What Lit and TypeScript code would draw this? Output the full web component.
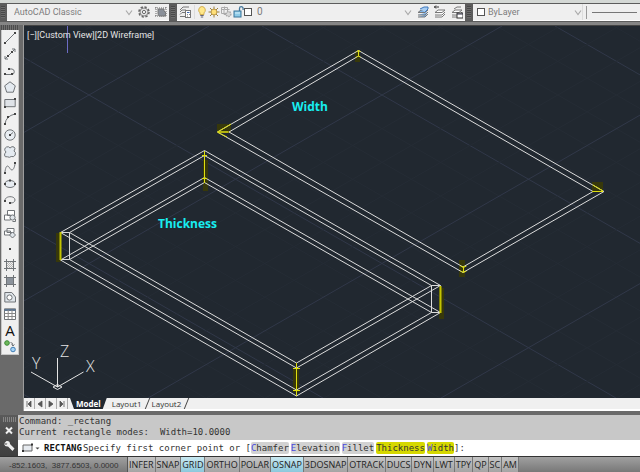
import { LitElement, html, svg, css } from "lit";
import { customElement } from "lit/decorators.js";
import { classMap } from "lit/directives/class-map.js";

const reset = css`
  :host, * { box-sizing: border-box; }
  button, select, input {
    margin: 0; padding: 0; border: 0; border-radius: 0; background: none;
    font: inherit; color: inherit; appearance: none; outline-offset: -1px;
  }
  svg { display: block; }
`;

const chevron = svg`<path d="M1 2.500l3 4 3-4" fill="none" stroke="#a8a8a8" stroke-width="1.100"/>`;

@customElement("tool-bars")
class ToolBars extends LitElement {
  static styles = [reset, css`
    :host {
      display: block; background: #5c5c5c; color: #7c7c7c;
      border-top: 3px solid #d4d8d5; padding: 1px 0 4px;
      box-shadow: inset 0 -3px #858585;
      font: 9px/16px Roboto, "Open Sans", sans-serif;
    }
    .row { display: grid; grid-template-columns: 162px 288px 1fr; gap: 8px; padding-left: 7px; }
    .bar { display: flex; align-items: center; height: 17px; background: #efefef; border-bottom: 1px solid #fff; position: relative; }
    .bar::before {
      content: ""; position: absolute; left: -6px; top: 2px; bottom: 2px; width: 4px;
      background: repeating-linear-gradient(#484848 0 1px, #6c6c6c 1px 2px);
    }
    .drop { display: flex; align-items: center; flex: 1; min-width: 0; height: 16px; }
    .drop select { flex: 1; min-width: 0; height: 16px; }
    .space select { padding-left: 7px; }
    .icons { display: flex; align-items: center; gap: 4px; padding: 0 2px; }
    .icons.wide { gap: 5px; padding: 0 2px 0 5px; }
    .icons button { width: 12px; height: 14px; }
    .icons.split { border-right: 1px solid #dcdcdc; padding-right: 3px; margin-right: 1px; }
    .layer select { padding-left: 4px; font-size: 10px; }
    .color { flex: none; width: 110px; border-right: 1px solid #dcdcdc; padding-left: 4px; }
    .color select { padding-left: 2px; }
    .line { flex: 1; margin-left: 3px; padding-left: 5px; border-left: 1px solid #999; height: 13px; display: flex; align-items: center; }
    .rule { width: 45px; border-top: 1px solid #777; }
  `];

  render() {
    return html`
      <div class="row">
        <div class="bar" role="toolbar" aria-label="Workspaces">
          <div class="drop space">
            <select aria-label="Workspace"><option>AutoCAD Classic</option></select>
            <svg width="8" height="8">${chevron}</svg>
          </div>
          <div class="icons wide">
            <button aria-label="Workspace settings">
              <svg width="12" height="14" viewBox="0 0 12 14" fill="none" stroke="#666">
                <circle cx="6" cy="7" r="5" stroke-width="1.600" stroke-dasharray="2.300 1.600"/>
                <circle cx="6" cy="7" r="4" stroke="#888" fill="#e2e2e2"/><circle cx="6" cy="7" r="1.600" fill="#fff"/>
              </svg>
            </button>
            <button aria-label="My workspace">
              <svg width="12" height="14" viewBox="0 0 12 14" fill="none" stroke="#666">
                <path d="M1 2v10M11 2v10M0 3h12M0 11h12" stroke-dasharray="1 1"/>
                <path d="M3 4h6v2l2 2-1 3H4L3 9z" fill="#8a9099" stroke="#777"/>
              </svg>
            </button>
          </div>
        </div>

        <div class="bar" role="toolbar" aria-label="Layers">
          <div class="icons split">
            <button aria-label="Layer properties">
              <svg width="12" height="14" viewBox="0 0 12 14" fill="#fff" stroke="#777">
                <path d="M1 5l3-3h6M1 7l2-2h4M1 9.500l2-2h3M1 11.500h5" fill="none"/>
                <rect x="6.500" y="5.500" width="5" height="7"/><path d="M8 7.500h2.500" stroke="#3a66b0"/><path d="M8 9.500h1M10 9.500h1M8 11.200h1" stroke="#888"/>
              </svg>
            </button>
          </div>
          <div class="drop layer">
            <svg width="12" height="14" viewBox="0 0 12 14">
              <path d="M6 1.500a3.600 3.600 0 0 1 2 6.400V9.500H4V7.900A3.600 3.600 0 0 1 6 1.500z" fill="#ffe88a" stroke="#c9a13a" stroke-width=".8"/>
              <path d="M4.300 10.500h3.400M4.800 12h2.400" stroke="#667"/>
            </svg>
            <svg width="12" height="14" viewBox="0 0 12 14">
              <path d="M6 1.500v11M.5 7h11M2 3l8 8M10 3l-8 8" stroke="#9a8040"/>
              <circle cx="6" cy="7" r="2.900" fill="#ffe07a" stroke="#b08a35" stroke-width=".8"/>
            </svg>
            <svg width="13" height="14" viewBox="0 0 13 14" fill="none" stroke="#aaa">
              <path d="M1.500 2.500h6v6h-6zM1 4.500h3v5h2M4.500 1.500v3h5"/>
              <circle cx="8.500" cy="9" r="2.400" fill="#d8d8d8" stroke-dasharray="1.500 .7" stroke-width="1.500"/>
            </svg>
            <svg width="11" height="14" viewBox="0 0 11 14">
              <path d="M6.500 6V3.500a1.800 1.800 0 0 1 3.600 0V5" fill="none" stroke="#46799c" stroke-width="1.300"/>
              <rect x="1" y="6" width="7" height="6" fill="#8ecbe8" stroke="#39749a"/><path d="M2 8h5" stroke="#d4f0fa"/>
            </svg>
            <svg width="9" height="14" viewBox="0 0 9 14"><rect x=".5" y="3.500" width="7" height="7" fill="#fff" stroke="#555"/></svg>
            <select aria-label="Layer"><option>0</option></select>
            <svg width="8" height="8">${chevron}</svg>
          </div>
          <div class="icons wide">
            ${["Make object's layer current", "Layer previous", "Layer states"].map((name, i) => html`
              <button aria-label=${name}>
                <svg width="12" height="14" viewBox="0 0 12 14" fill="none" stroke="#777">
                  <path d="M1 12h7l3-3M1 10h7l3-3M1 7.500l3-2.500h7L8 7.500z" fill=${i === 0 ? "#7fb2e6" : "#fff"}/>
                  ${i === 0 ? svg`<path d="M3 4l4-2h4v2l-3 3" stroke="#3d78bd" fill="#a8cdf2"/>` : ""}
                  ${i === 1 ? svg`<path d="M0 2h5M2 .5L.5 2 2 3.500" stroke="#333"/>` : ""}
                  ${i === 2 ? svg`<path d="M3 4l3-2h4"/><rect x="6" y="8" width="6" height="5" fill="#fff" stroke="#333"/><path d="M6 9h6" stroke="#334"/>` : ""}
                </svg>
              </button>`)}
          </div>
        </div>

        <div class="bar" role="toolbar" aria-label="Properties">
          <div class="drop color">
            <svg width="9" height="14" viewBox="0 0 9 14"><rect x=".5" y="3.500" width="7" height="7" fill="#fff" stroke="#555"/></svg>
            <select aria-label="Color"><option>ByLayer</option></select>
            <svg width="8" height="8">${chevron}</svg>
          </div>
          <div class="line"><div class="rule"></div></div>
        </div>
      </div>`;
  }
}

const dot = (x: number, y: number) => svg`<rect x=${x - 1} y=${y - 1} width="2" height="2" fill="#444" stroke="none"/>`;

const drawTools = [
  { name: "Line", art: svg`<path d="M1 11L11 1"/>${dot(1, 11)}${dot(11, 1)}` },
  { name: "Construction line", art: svg`<path d="M1 11L11 1M1 8v3h3M8 1h3v3"/>${dot(4, 8)}${dot(8, 4)}` },
  { name: "Polyline", art: svg`<path d="M1 9.500h7a2.800 2.800 0 0 0 0-5.500H5"/>${dot(1, 9)}${dot(5, 4)}${dot(8, 9)}` },
  { name: "Polygon", art: svg`<path d="M6 .8l5.300 4-2 6.400H2.700l-2-6.400z" fill="#e4eaf0"/>` },
  { name: "Rectangle", art: svg`<path d="M.8 2.500h10.400v7.200H.8z" fill="#dfe3e8"/>${dot(11, 2)}${dot(1, 10)}` },
  { name: "Arc", art: svg`<path d="M1 11Q2 3 11 1"/>${dot(1, 11)}${dot(4, 4)}${dot(11, 1)}` },
  { name: "Circle", art: svg`<circle cx="6" cy="6" r="5.200" fill="#e8edf2"/><path d="M6 6l3-2.500"/>${dot(6, 6)}` },
  { name: "Revision cloud", art: svg`<path d="M2.500 1q2.200-1 3.500 1Q8-.2 10 1q2 1.500 0 4 2.300 1.200 1.200 4-1.200 2.500-4 1.500-1.700 1.500-3.700.3Q.5 11.500.5 9q0-1.500 1.500-3Q-.8 3 2.500 1z" fill="#e4eaf0"/>` },
  { name: "Spline", art: svg`<path d="M.8 11C2 1 4.500 4 6 6.500S10 9 11.200 1"/>${dot(1, 11)}${dot(11, 1)}` },
  { name: "Ellipse", art: svg`<ellipse cx="6" cy="6" rx="5.300" ry="3.500" fill="#e8edf2"/>${dot(1, 6)}${dot(11, 6)}${dot(6, 2.5)}` },
  { name: "Ellipse arc", art: svg`<path d="M1 6.500C1 1.500 11 1.500 11 6c0 2-2 3-4.500 3"/>${dot(1, 7)}${dot(6, 9)}` },
  { name: "Insert block", art: svg`<path d="M3.500 .5h7v5h-7zM.5 5h6v5h-6z" fill="#fff"/><circle cx="8.500" cy="7.500" r="2.600" fill="#dfe5ea"/><path d="M8.500 11.500h3V9"/>` },
  { name: "Make block", art: svg`<path d="M3 1.500h7v4H3zM.5 4h6v4h-6z" fill="#fff"/><path d="M8.500 5l3 3-3 3-3-3z" fill="#dfe5ea"/>` },
  { name: "Point", art: svg`${dot(6, 6)}` },
  { name: "Hatch", art: svg`<path d="M2.500 0v12M9.500 0v12M0 2.500h12M0 9.500h12"/><path d="M3 5l2-2M3 7l4-4M3 9l6-6M5 9l4-4M7 9l2-2" stroke="#999" stroke-width=".7"/>` },
  { name: "Gradient", art: svg`<rect x="3" y="3" width="6" height="6" fill="#8b929b" stroke="none"/><path d="M2.500 0v12M9.500 0v12M0 2.500h12M0 9.500h12"/>` },
  { name: "Region", art: svg`<path d="M.8 1.500h7L11.500 6v5H.8z" fill="#dfe5ea"/><circle cx="5.500" cy="6.500" r="2.600" fill="#fff"/>` },
  { name: "Table", art: svg`<path d="M.5.800h11v10.700H.5z" fill="#fff"/><path d="M.5 2h11" stroke="#5d7590" stroke-width="2"/><path d="M.5 5.500h11M.5 8.500h11M4.200 2v9M8 2v9" stroke="#888"/>` },
  { name: "Multiline text", letter: "A" },
  { name: "Add selected", art: svg`<circle cx="3" cy="3" r="2.300" fill="#6fb95c" stroke="#3a8a35"/><circle cx="9" cy="9.500" r="2.300" fill="#a5d2f5" stroke="#3f7db5"/><path d="M6.500 2.500q2.500 0 2.500 3M7.500 4.500L9 6l1.500-1.500"/>` },
];

@customElement("draw-palette")
class DrawPalette extends LitElement {
  static styles = [reset, css`
    :host { display: block; background: #6a6a6a; padding: 0 4px 0 1px; border-right: 1px solid #9c9c9c; }
    .grip { height: 5px; background: repeating-linear-gradient(90deg, #4c4c4c 0 1px, #707070 1px 2px); }
    .tools { display: flex; flex-direction: column; height: 325px; background: #f0f0f0; border: 1px solid #c8c8c8; border-top: 0; }
    .tools button { flex: 1; min-height: 0; display: flex; align-items: center; justify-content: center; }
    .tools svg { overflow: visible; }
    .letter { font: 15px/16px "Open Sans", sans-serif; color: #111; }
  `];
  render() {
    return html`
      <div class="grip"></div>
      <div class="tools" role="toolbar" aria-label="Draw">
        ${drawTools.map(t => html`<button aria-label=${t.name}>${t.letter
          ? html`<span class="letter">${t.letter}</span>`
          : html`<svg width="12" height="12" viewBox="0 0 12 12" fill="none" stroke="#707478">${t.art}</svg>`}</button>`)}
      </div>`;
  }
}

type Pt = [number, number];
const ring = (pts: Pt[]) => svg`<polygon points=${pts.map(p => p.join(",")).join(" ")}/>`;

/* Isometric grid: every fifth line is a major one. */
const SLOPE = 0.575;
const gridLines = () => {
  const out = [];
  for (let i = -20; i <= 40; i++) {
    const major = i % 5 === 0;
    const down = 262 + i * 58.6;
    const up = 209 + i * 58.6;
    const run = 700;
    const ink = major ? "#313849" : "#252c35";
    out.push(svg`<path stroke=${ink} d=${`M${down} 26l${run} ${run * SLOPE}M${up} 26l${-run} ${run * SLOPE}`}/>`);
  }
  return out;
};

@customElement("model-space")
class ModelSpace extends LitElement {
  static styles = [reset, css`
    :host { display: block; position: relative; background: #212830; border-top: 1px solid #444; overflow: hidden; min-height: 240px; }
    .scene { position: absolute; inset: 0; width: 100%; height: 100%; }
    .note { font: bold 12px "Open Sans", sans-serif; fill: #18eef0; }
    .axis { font: 16px "Open Sans", sans-serif; font-weight: 300; fill: #e4e4e4; }
    .view { position: relative; display: flex; padding: 2px 3px; color: #e4e4e4; font: 9px/14px Roboto, "Open Sans", sans-serif; }
  `];
  render() {
    return html`
      <svg class="scene" viewBox="24 26 616 372" preserveAspectRatio="xMinYMin slice" role="img" aria-label="Wireframe drawing">
        <g fill="none">${gridLines()}</g>
        <path d="M67.500 26v27" stroke="#6c6cc4"/>
        <g fill="#37380a">
          <rect x="217" y="124" width="14" height="9"/><rect x="355" y="51" width="5" height="11"/>
          <rect x="592" y="182" width="11" height="9"/><rect x="459" y="260" width="6" height="17"/>
          <rect x="203" y="160" width="5" height="31"/><rect x="56" y="233" width="5" height="29"/>
          <rect x="439" y="288" width="5" height="31"/><rect x="293" y="368" width="6" height="24"/>
        </g>
        <g fill="none" stroke="#dcdcdc">
          ${ring([[358.5, 50.5], [604, 191.5], [463, 272.5], [217.5, 132]])}
          ${ring([[358.5, 56], [593, 191.5], [463, 267], [229, 132]])}
          ${ring([[204.5, 150.5], [440.5, 285.5], [296.5, 368], [60.5, 232.5]])}
          ${ring([[204.5, 155.5], [431.5, 285.5], [296.5, 363], [69.5, 232.5]])}
          ${ring([[204.5, 177.5], [440.5, 312.5], [296.5, 396], [60.5, 260]])}
          ${ring([[204.5, 182.5], [431.5, 312.5], [296.5, 390], [69.5, 259.5]])}
          <path d="M60.500 232.500h9v27h-9M440.500 285.500h-9v27h9"/>
        </g>
        <g fill="none" stroke="#dede10">
          <path d="M358.500 50v6M356.500 51.500l2-1 2 1M356.500 57l2-1 2 1M231 124l-13.500 8 11.500 0M218 132.500l9 4.500M218 132h10"/>
          <path d="M593 185l10 6M592 191.500h11M463.500 266v6M460.500 266l3 1.500 3-1.500M460.500 271l3 1.500 3-1.500"/>
          <path d="M204.500 151v32M202 155.500h5M202 178.500h5M296.500 363v33M293 368.500h7M293 390.500h7"/>
          <path d="M60.500 232v28M440.500 286v27" stroke="#c4c400" stroke-width="2"/>
        </g>
        <g fill="none" stroke="#e4e4e4">
          <path d="M57.500 358v29M31 372l26.500 15L83.500 372"/>
          <path d="M53 387l4.500-2.500 4.500 2.500-4.500 2.500z"/>
        </g>
        <text class="axis" x="60" y="357">Z</text>
        <text class="axis" x="32" y="369">Y</text>
        <text class="axis" x="86" y="372">X</text>
        <text class="note" x="292" y="111">Width</text>
        <text class="note" x="158" y="228">Thickness</text>
      </svg>
      <div class="view"><button>[−]</button><button>[Custom View]</button><button>[2D Wireframe]</button></div>`;
  }
}

@customElement("layout-tabs")
class LayoutTabs extends LitElement {
  static properties = { current: { state: true } };
  declare current: string;
  constructor() { super(); this.current = "Model"; }
  static styles = [reset, css`
    :host { display: flex; height: 13px; background: #f0f0f0; border-bottom: 2px solid #fff; color: #333; font: 8px/11px "Open Sans", "Noto Sans", sans-serif; }
    .step { width: 11px; height: 11px; border-right: 1px solid #aaa; display: flex; align-items: center; justify-content: center; }
    .tabs { display: flex; padding-left: 2px; }
    .tab { height: 11px; padding: 0 5px; position: relative; }
    .tab::after { content: ""; position: absolute; right: -1px; top: 0; height: 11px; border-right: 1px solid #444; transform: skewX(-22deg); }
    .on { background: #212830; color: #fff; font-weight: bold; padding: 0 6px; clip-path: polygon(0 0, 100% 0, calc(100% - 4px) 100%, 4px 100%); }
  `];
  render() {
    const arrows = ["M2 1v6M6 1L3 4l3 3z", "M6 1L2 4l4 3z", "M2 1l4 3-4 3z", "M6 1v6M2 1l3 3-3 3z"];
    const names = ["First layout", "Previous layout", "Next layout", "Last layout"];
    return html`
      ${arrows.map((d, i) => html`<button class="step" aria-label=${names[i]}><svg width="8" height="8" fill="#555" stroke="#555"><path d=${d} stroke-width=".8"/></svg></button>`)}
      <div class="tabs" role="tablist">
        ${["Model", "Layout1", "Layout2"].map(t => html`
          <button role="tab" class=${classMap({ tab: true, on: t === this.current })} aria-selected=${t === this.current} @click=${() => (this.current = t)}>${t}</button>`)}
      </div>`;
  }
}

@customElement("command-window")
class CommandWindow extends LitElement {
  static styles = [reset, css`
    :host { display: grid; grid-template-columns: 18px 1fr; background: #585858; border-bottom: 1px solid #333; color: #333; font: 9px/11px "DejaVu Sans Mono", "Liberation Mono", monospace; }
    .side { display: flex; flex-direction: column; align-items: center; gap: 3px; padding-top: 2px; background: linear-gradient(#5a5a5a, #3e3e3e); }
    .grip { width: 13px; height: 5px; background: repeating-linear-gradient(90deg, #999 0 1px, transparent 1px 2px); opacity: .7; }
    .side button { height: 12px; }
    .log { margin: 0; padding: 1px 1px 2px; height: 25px; background: #c8c8c8; font: inherit; }
    .entry { display: flex; align-items: center; height: 16px; background: #fff; padding-left: 3px; white-space: pre; }
    .recent { display: flex; align-items: center; width: 19px; margin-right: 4px; }
    .cmd { color: #111; margin-right: 1px; }
    .opts { display: flex; gap: 2px; }
    .opt { background: #d2d2d2; border-radius: 2px; height: 12px; line-height: 12px; color: #333; }
    .key { color: #4a4ae0; }
    .marked { background: #d6d800; }
    .marked.full .key { color: #333; }
    .typed { flex: 1; min-width: 0; height: 12px; }
  `];
  render() {
    const opts = ["Chamfer", "Elevation", "Fillet", "Thickness", "Width"];
    return html`
      <div class="side">
        <div class="grip"></div>
        <button aria-label="Close"><svg width="8" height="12" viewBox="0 0 8 12"><path d="M1 2.500l6 6M7 2.500l-6 6" stroke="#eee" stroke-width="2"/></svg></button>
        <button aria-label="Customize"><svg width="12" height="12" viewBox="0 0 12 12"><path d="M1 3.500L3.500 1Q7 .5 7 4l4.500 4.500-2 2.500L5 6.500Q2 7 1 4l2.200.8L4.500 3.500z" fill="#eee"/></svg></button>
      </div>
      <div>
        <pre class="log">Command: _rectang
Current rectangle modes:  Width=10.0000</pre>
        <div class="entry">
          <button class="recent" aria-label="Recent commands">
            <svg width="19" height="12" viewBox="0 0 19 12"><path d="M2 3h9v6H2z" fill="#e6eaef" stroke="#666"/><path d="M1 9h2M10 2.500h2" stroke="#333" stroke-width="2"/><path d="M14.500 5.500h4l-2 2z" fill="#444"/></svg>
          </button>
          <b class="cmd">RECTANG</b><label for="typed">Specify first corner point or [</label>
          <span class="opts">${opts.map(o => html`<button class=${classMap({ opt: true, marked: o === "Thickness" || o === "Width", full: o === "Thickness" })}><span class="key">${o[0]}</span>${o.slice(1)}</button>`)}</span><span>]:</span>
          <input class="typed" id="typed" type="text" autocomplete="off">
        </div>
      </div>`;
  }
}

@customElement("status-bar")
class StatusBar extends LitElement {
  static properties = { active: { state: true } };
  declare active: string[];
  constructor() { super(); this.active = ["GRID", "OSNAP"]; }
  static styles = [reset, css`
    :host { display: flex; height: 15px; background: linear-gradient(#a0a0a0, #787878); color: #222; font: 9px/15px "Open Sans", "Noto Sans", sans-serif; }
    .coords { width: 128px; padding-left: 9px; color: #333; white-space: pre; border-right: 1px solid #555; font: 8px/17px "Liberation Sans", sans-serif; }
    .mode { height: 15px; padding: 0 1px; border-right: 1px solid #777; background: linear-gradient(#c4c4c4, #a4a4a4); }
    .on { background: linear-gradient(#c8e8f0, #8cc8dc); }
  `];
  toggle(m: string) {
    this.active = this.active.includes(m) ? this.active.filter(x => x !== m) : [...this.active, m];
  }
  render() {
    const modes = ["INFER", "SNAP", "GRID", "ORTHO", "POLAR", "OSNAP", "3DOSNAP", "OTRACK", "DUCS", "DYN", "LWT", "TPY", "QP", "SC", "AM"];
    return html`
      <div class="coords">-852.1603,  3877.6503, 0.0000</div>
      ${modes.map(m => html`<button class=${classMap({ mode: true, on: this.active.includes(m) })} aria-pressed=${this.active.includes(m)} @click=${() => this.toggle(m)}>${m}</button>`)}`;
  }
}

@customElement("app-root")
class AppRoot extends LitElement {
  static styles = css`
    :host { display: flex; flex-direction: column; min-height: 100vh; background: #6a6a6a; }
    .work { flex: 1; display: grid; grid-template-columns: 24px 1fr; border-bottom: 4px solid #6a6a6a; }
    .sheet { display: flex; flex-direction: column; min-width: 0; }
    model-space { flex: 1; }
  `;
  render() {
    return html`
      <tool-bars></tool-bars>
      <div class="work">
        <draw-palette></draw-palette>
        <div class="sheet"><model-space></model-space><layout-tabs></layout-tabs></div>
      </div>
      <command-window></command-window>
      <status-bar></status-bar>`;
  }
}
